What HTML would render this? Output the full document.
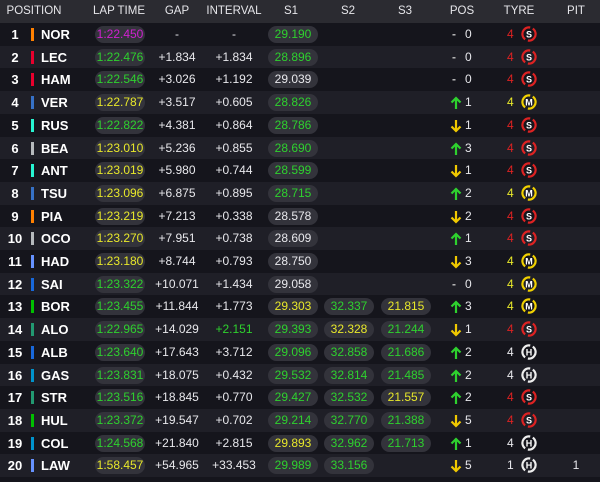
<!DOCTYPE html>
<html><head><meta charset="utf-8"><style>
*{margin:0;padding:0;box-sizing:border-box}
body{width:600px;height:482px;background:#15151c;font-family:"Liberation Sans",sans-serif;color:#e8e8ec;overflow:hidden;position:relative}
.hd{position:absolute;left:0;top:0;width:600px;height:23px;background:#2b2b31;font-size:11.5px;color:#e6e6ea}
.hd span{position:absolute;top:5px;transform:translateX(-50%);white-space:nowrap}
.r{position:absolute;left:0;width:600px;height:22.7px;font-size:12px}
.r:nth-child(even){background:#1f1f27}
.r:nth-child(odd){background:#15151c}
.r>*{position:absolute}
.n{left:6px;width:18px;text-align:center;top:4px;font-weight:bold;font-size:13px;color:#fff}
.b{left:31px;top:5px;width:3px;height:13px}
.c{left:41px;top:4px;font-weight:bold;font-size:13px;color:#fff}
.p{height:17px;top:3px;background:#33333b;border-radius:9px;text-align:center;line-height:17px;font-size:12px}
.lt{left:95px;width:50px}
.s1{left:268px;width:50px}
.s2{left:324px;width:50px}
.s3{left:381px;width:50px}
.t{top:4px;transform:translateX(-50%);white-space:nowrap}
.g{color:#2ed12e}.y{color:#e8e82a}.pu{color:#d020d0}.w{color:#e8e8ec}
.ar{left:450px;top:5px}
.ds{left:452px;top:4px;color:#bbb;font-weight:bold}
.pn{left:465px;top:4px}
.ta{left:507px;top:4px}
.ty{left:521px;top:3px}
.red{color:#d22}
</style></head><body>
<div class="hd"><span style="left:34px">POSITION</span><span style="left:119px">LAP TIME</span><span style="left:177px">GAP</span><span style="left:234px">INTERVAL</span><span style="left:291px">S1</span><span style="left:348px">S2</span><span style="left:405px">S3</span><span style="left:462px">POS</span><span style="left:519px">TYRE</span><span style="left:576px">PIT</span></div>
<svg width="0" height="0" style="position:absolute"><defs>
<g id="ring"><circle cx="8" cy="8" r="6.6" fill="none" stroke-width="2.2" stroke-dasharray="17.7 3 17.7 3" transform="rotate(-55 8 8)"/></g>
<g id="up"><path d="M6 13V2M1.5 6.5L6 2L10.5 6.5" fill="none" stroke="#2ed12e" stroke-width="2.2"/></g>
<g id="dn"><path d="M6 1V12M1.5 7.5L6 12L10.5 7.5" fill="none" stroke="#f0c800" stroke-width="2.2"/></g>
</defs></svg>
<div id="rows">
<div class="r" style="top:23px"><span class="n">1</span><i class="b" style="background:#ff8000"></i><span class="c">NOR</span><span class="p lt pu">1:22.450</span><span class="t" style="left:177px">-</span><span class="t" style="left:234px">-</span><span class="p s1 g">29.190</span><span class="ds">-</span><span class="pn">0</span><span class="ta red">4</span><svg class="ty" width="16" height="16"><use href="#ring" stroke="#d22"/><text x="8" y="11.5" text-anchor="middle" font-size="9" font-weight="bold" fill="#fff" font-family="Liberation Sans">S</text></svg></div>
<div class="r" style="top:45.7px"><span class="n">2</span><i class="b" style="background:#e8002d"></i><span class="c">LEC</span><span class="p lt g">1:22.476</span><span class="t" style="left:177px">+1.834</span><span class="t" style="left:234px">+1.834</span><span class="p s1 g">28.896</span><span class="ds">-</span><span class="pn">0</span><span class="ta red">4</span><svg class="ty" width="16" height="16"><use href="#ring" stroke="#d22"/><text x="8" y="11.5" text-anchor="middle" font-size="9" font-weight="bold" fill="#fff" font-family="Liberation Sans">S</text></svg></div>
<div class="r" style="top:68.4px"><span class="n">3</span><i class="b" style="background:#e8002d"></i><span class="c">HAM</span><span class="p lt g">1:22.546</span><span class="t" style="left:177px">+3.026</span><span class="t" style="left:234px">+1.192</span><span class="p s1 w">29.039</span><span class="ds">-</span><span class="pn">0</span><span class="ta red">4</span><svg class="ty" width="16" height="16"><use href="#ring" stroke="#d22"/><text x="8" y="11.5" text-anchor="middle" font-size="9" font-weight="bold" fill="#fff" font-family="Liberation Sans">S</text></svg></div>
<div class="r" style="top:91.1px"><span class="n">4</span><i class="b" style="background:#3671c6"></i><span class="c">VER</span><span class="p lt y">1:22.787</span><span class="t" style="left:177px">+3.517</span><span class="t" style="left:234px">+0.605</span><span class="p s1 g">28.826</span><svg class="ar" width="12" height="14"><use href="#up"/></svg><span class="pn">1</span><span class="ta y">4</span><svg class="ty" width="16" height="16"><use href="#ring" stroke="#f0d000"/><text x="8" y="11.5" text-anchor="middle" font-size="9" font-weight="bold" fill="#fff" font-family="Liberation Sans">M</text></svg></div>
<div class="r" style="top:113.8px"><span class="n">5</span><i class="b" style="background:#27f4d2"></i><span class="c">RUS</span><span class="p lt g">1:22.822</span><span class="t" style="left:177px">+4.381</span><span class="t" style="left:234px">+0.864</span><span class="p s1 g">28.786</span><svg class="ar" width="12" height="14"><use href="#dn"/></svg><span class="pn">1</span><span class="ta red">4</span><svg class="ty" width="16" height="16"><use href="#ring" stroke="#d22"/><text x="8" y="11.5" text-anchor="middle" font-size="9" font-weight="bold" fill="#fff" font-family="Liberation Sans">S</text></svg></div>
<div class="r" style="top:136.5px"><span class="n">6</span><i class="b" style="background:#b6babd"></i><span class="c">BEA</span><span class="p lt y">1:23.010</span><span class="t" style="left:177px">+5.236</span><span class="t" style="left:234px">+0.855</span><span class="p s1 g">28.690</span><svg class="ar" width="12" height="14"><use href="#up"/></svg><span class="pn">3</span><span class="ta red">4</span><svg class="ty" width="16" height="16"><use href="#ring" stroke="#d22"/><text x="8" y="11.5" text-anchor="middle" font-size="9" font-weight="bold" fill="#fff" font-family="Liberation Sans">S</text></svg></div>
<div class="r" style="top:159.2px"><span class="n">7</span><i class="b" style="background:#27f4d2"></i><span class="c">ANT</span><span class="p lt y">1:23.019</span><span class="t" style="left:177px">+5.980</span><span class="t" style="left:234px">+0.744</span><span class="p s1 g">28.599</span><svg class="ar" width="12" height="14"><use href="#dn"/></svg><span class="pn">1</span><span class="ta red">4</span><svg class="ty" width="16" height="16"><use href="#ring" stroke="#d22"/><text x="8" y="11.5" text-anchor="middle" font-size="9" font-weight="bold" fill="#fff" font-family="Liberation Sans">S</text></svg></div>
<div class="r" style="top:181.9px"><span class="n">8</span><i class="b" style="background:#3671c6"></i><span class="c">TSU</span><span class="p lt y">1:23.096</span><span class="t" style="left:177px">+6.875</span><span class="t" style="left:234px">+0.895</span><span class="p s1 g">28.715</span><svg class="ar" width="12" height="14"><use href="#up"/></svg><span class="pn">2</span><span class="ta y">4</span><svg class="ty" width="16" height="16"><use href="#ring" stroke="#f0d000"/><text x="8" y="11.5" text-anchor="middle" font-size="9" font-weight="bold" fill="#fff" font-family="Liberation Sans">M</text></svg></div>
<div class="r" style="top:204.6px"><span class="n">9</span><i class="b" style="background:#ff8000"></i><span class="c">PIA</span><span class="p lt y">1:23.219</span><span class="t" style="left:177px">+7.213</span><span class="t" style="left:234px">+0.338</span><span class="p s1 w">28.578</span><svg class="ar" width="12" height="14"><use href="#dn"/></svg><span class="pn">2</span><span class="ta red">4</span><svg class="ty" width="16" height="16"><use href="#ring" stroke="#d22"/><text x="8" y="11.5" text-anchor="middle" font-size="9" font-weight="bold" fill="#fff" font-family="Liberation Sans">S</text></svg></div>
<div class="r" style="top:227.3px"><span class="n">10</span><i class="b" style="background:#b6babd"></i><span class="c">OCO</span><span class="p lt y">1:23.270</span><span class="t" style="left:177px">+7.951</span><span class="t" style="left:234px">+0.738</span><span class="p s1 w">28.609</span><svg class="ar" width="12" height="14"><use href="#up"/></svg><span class="pn">1</span><span class="ta red">4</span><svg class="ty" width="16" height="16"><use href="#ring" stroke="#d22"/><text x="8" y="11.5" text-anchor="middle" font-size="9" font-weight="bold" fill="#fff" font-family="Liberation Sans">S</text></svg></div>
<div class="r" style="top:250px"><span class="n">11</span><i class="b" style="background:#6692ff"></i><span class="c">HAD</span><span class="p lt y">1:23.180</span><span class="t" style="left:177px">+8.744</span><span class="t" style="left:234px">+0.793</span><span class="p s1 w">28.750</span><svg class="ar" width="12" height="14"><use href="#dn"/></svg><span class="pn">3</span><span class="ta y">4</span><svg class="ty" width="16" height="16"><use href="#ring" stroke="#f0d000"/><text x="8" y="11.5" text-anchor="middle" font-size="9" font-weight="bold" fill="#fff" font-family="Liberation Sans">M</text></svg></div>
<div class="r" style="top:272.7px"><span class="n">12</span><i class="b" style="background:#1868db"></i><span class="c">SAI</span><span class="p lt g">1:23.322</span><span class="t" style="left:177px">+10.071</span><span class="t" style="left:234px">+1.434</span><span class="p s1 w">29.058</span><span class="ds">-</span><span class="pn">0</span><span class="ta y">4</span><svg class="ty" width="16" height="16"><use href="#ring" stroke="#f0d000"/><text x="8" y="11.5" text-anchor="middle" font-size="9" font-weight="bold" fill="#fff" font-family="Liberation Sans">M</text></svg></div>
<div class="r" style="top:295.4px"><span class="n">13</span><i class="b" style="background:#00c000"></i><span class="c">BOR</span><span class="p lt g">1:23.455</span><span class="t" style="left:177px">+11.844</span><span class="t" style="left:234px">+1.773</span><span class="p s1 y">29.303</span><span class="p s2 g">32.337</span><span class="p s3 y">21.815</span><svg class="ar" width="12" height="14"><use href="#up"/></svg><span class="pn">3</span><span class="ta y">4</span><svg class="ty" width="16" height="16"><use href="#ring" stroke="#f0d000"/><text x="8" y="11.5" text-anchor="middle" font-size="9" font-weight="bold" fill="#fff" font-family="Liberation Sans">M</text></svg></div>
<div class="r" style="top:318.1px"><span class="n">14</span><i class="b" style="background:#229971"></i><span class="c">ALO</span><span class="p lt g">1:22.965</span><span class="t" style="left:177px">+14.029</span><span class="t g" style="left:234px">+2.151</span><span class="p s1 g">29.393</span><span class="p s2 y">32.328</span><span class="p s3 g">21.244</span><svg class="ar" width="12" height="14"><use href="#dn"/></svg><span class="pn">1</span><span class="ta red">4</span><svg class="ty" width="16" height="16"><use href="#ring" stroke="#d22"/><text x="8" y="11.5" text-anchor="middle" font-size="9" font-weight="bold" fill="#fff" font-family="Liberation Sans">S</text></svg></div>
<div class="r" style="top:340.8px"><span class="n">15</span><i class="b" style="background:#1868db"></i><span class="c">ALB</span><span class="p lt g">1:23.640</span><span class="t" style="left:177px">+17.643</span><span class="t" style="left:234px">+3.712</span><span class="p s1 g">29.096</span><span class="p s2 g">32.858</span><span class="p s3 g">21.686</span><svg class="ar" width="12" height="14"><use href="#up"/></svg><span class="pn">2</span><span class="ta w">4</span><svg class="ty" width="16" height="16"><use href="#ring" stroke="#eee"/><text x="8" y="11.5" text-anchor="middle" font-size="9" font-weight="bold" fill="#fff" font-family="Liberation Sans">H</text></svg></div>
<div class="r" style="top:363.5px"><span class="n">16</span><i class="b" style="background:#0093cc"></i><span class="c">GAS</span><span class="p lt g">1:23.831</span><span class="t" style="left:177px">+18.075</span><span class="t" style="left:234px">+0.432</span><span class="p s1 g">29.532</span><span class="p s2 g">32.814</span><span class="p s3 g">21.485</span><svg class="ar" width="12" height="14"><use href="#up"/></svg><span class="pn">2</span><span class="ta w">4</span><svg class="ty" width="16" height="16"><use href="#ring" stroke="#eee"/><text x="8" y="11.5" text-anchor="middle" font-size="9" font-weight="bold" fill="#fff" font-family="Liberation Sans">H</text></svg></div>
<div class="r" style="top:386.2px"><span class="n">17</span><i class="b" style="background:#229971"></i><span class="c">STR</span><span class="p lt g">1:23.516</span><span class="t" style="left:177px">+18.845</span><span class="t" style="left:234px">+0.770</span><span class="p s1 g">29.427</span><span class="p s2 g">32.532</span><span class="p s3 y">21.557</span><svg class="ar" width="12" height="14"><use href="#up"/></svg><span class="pn">2</span><span class="ta red">4</span><svg class="ty" width="16" height="16"><use href="#ring" stroke="#d22"/><text x="8" y="11.5" text-anchor="middle" font-size="9" font-weight="bold" fill="#fff" font-family="Liberation Sans">S</text></svg></div>
<div class="r" style="top:408.9px"><span class="n">18</span><i class="b" style="background:#00c000"></i><span class="c">HUL</span><span class="p lt g">1:23.372</span><span class="t" style="left:177px">+19.547</span><span class="t" style="left:234px">+0.702</span><span class="p s1 g">29.214</span><span class="p s2 g">32.770</span><span class="p s3 g">21.388</span><svg class="ar" width="12" height="14"><use href="#dn"/></svg><span class="pn">5</span><span class="ta red">4</span><svg class="ty" width="16" height="16"><use href="#ring" stroke="#d22"/><text x="8" y="11.5" text-anchor="middle" font-size="9" font-weight="bold" fill="#fff" font-family="Liberation Sans">S</text></svg></div>
<div class="r" style="top:431.6px"><span class="n">19</span><i class="b" style="background:#0093cc"></i><span class="c">COL</span><span class="p lt g">1:24.568</span><span class="t" style="left:177px">+21.840</span><span class="t" style="left:234px">+2.815</span><span class="p s1 y">29.893</span><span class="p s2 g">32.962</span><span class="p s3 g">21.713</span><svg class="ar" width="12" height="14"><use href="#up"/></svg><span class="pn">1</span><span class="ta w">4</span><svg class="ty" width="16" height="16"><use href="#ring" stroke="#eee"/><text x="8" y="11.5" text-anchor="middle" font-size="9" font-weight="bold" fill="#fff" font-family="Liberation Sans">H</text></svg></div>
<div class="r" style="top:454.3px"><span class="n">20</span><i class="b" style="background:#6692ff"></i><span class="c">LAW</span><span class="p lt y">1:58.457</span><span class="t" style="left:177px">+54.965</span><span class="t" style="left:234px">+33.453</span><span class="p s1 g">29.989</span><span class="p s2 g">33.156</span><svg class="ar" width="12" height="14"><use href="#dn"/></svg><span class="pn">5</span><span class="ta w">1</span><svg class="ty" width="16" height="16"><use href="#ring" stroke="#eee"/><text x="8" y="11.5" text-anchor="middle" font-size="9" font-weight="bold" fill="#fff" font-family="Liberation Sans">H</text></svg><span class="t" style="left:576px">1</span></div>
</div>
</body></html>
